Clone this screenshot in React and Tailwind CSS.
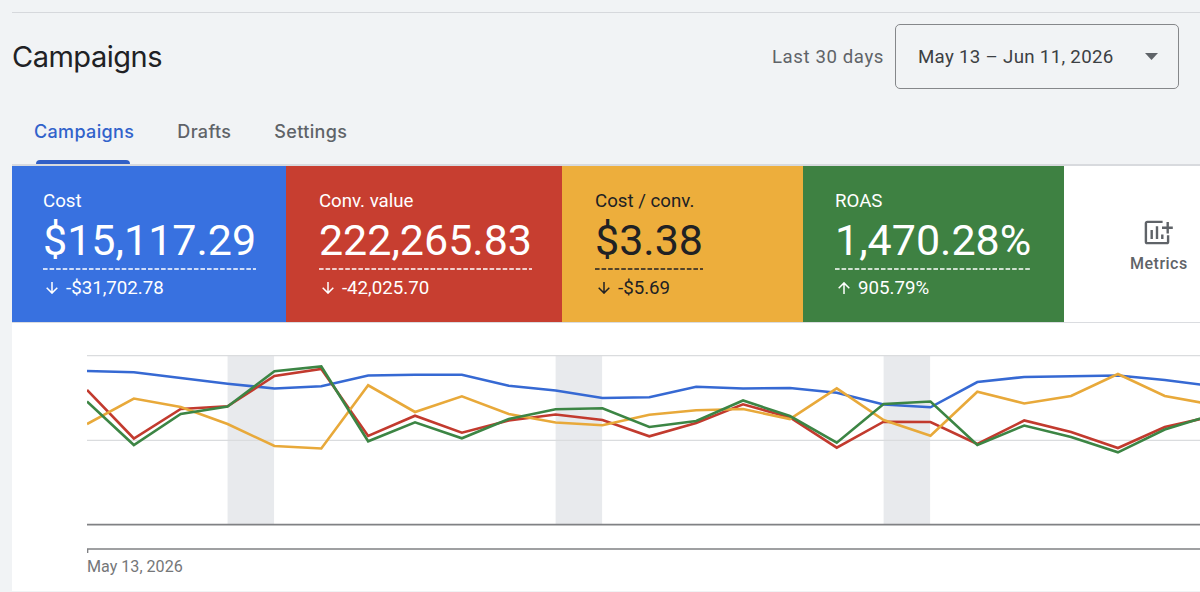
import { clsx } from 'clsx';

const TABS = ['Campaigns', 'Drafts', 'Settings'];

const CARDS = [
  { label: 'Cost', value: '$15,117.29', delta: '-$31,702.78', up: false, box: 'w-[274.4px] pl-[31px] bg-[#3871e0] text-white', line: '#ffffff' },
  { label: 'Conv. value', value: '222,265.83', delta: '-42,025.70', up: false, box: 'w-[275.6px] pl-[32.5px] bg-[#c73e30] text-white', line: '#ffffff' },
  { label: 'Cost / conv.', value: '$3.38', delta: '-$5.69', up: false, box: 'w-[241px] pl-[33px] bg-[#edae3c] text-[#202124]', line: '#202124' },
  { label: 'ROAS', value: '1,470.28%', delta: '905.79%', up: true, box: 'w-[261px] pl-8 bg-[#3e8142] text-white', line: '#ffffff' },
];

// Daily points, y in chart pixels
const STEP = 46.86;
const SERIES = [
  { color: '#3669d3', points: [31, 32.3, 38, 43.7, 48.5, 46.3, 35.5, 34.7, 34.7, 45.7, 50.5, 58, 57.3, 46.7, 48.5, 48, 52.7, 64.5, 67.3, 42, 37, 36.3, 35.5, 40, 46] },
  { color: '#c23a2e', points: [50, 98.5, 69, 66.3, 36, 29, 96, 75.7, 92.7, 80.5, 74.5, 80, 96.3, 83, 64.3, 77.5, 107.7, 81.7, 82, 104, 80.5, 92, 108, 87, 76.5] },
  { color: '#e8a93a', points: [84, 58.5, 67, 84, 106, 108.5, 45.3, 72, 56.3, 74, 82.5, 85.3, 74.7, 70.3, 69, 79, 48.3, 80, 95.7, 51.7, 63.5, 56, 34, 56, 64.5] },
  { color: '#3c8544', points: [61.5, 105, 74, 66.5, 31.3, 26.5, 101.3, 82.3, 98.3, 79, 69.3, 68.3, 87, 81, 60.5, 76, 102.7, 64, 61.5, 105, 85.5, 97, 112.3, 89.5, 75] },
];
const WEEKENDS = [3, 10, 17];

function Arrow({ up }) {
  return (
    <svg width="12" height="12" viewBox="0 0 12 12" fill="none" stroke="currentColor" strokeWidth="1.5" className={clsx('ml-[3px] mr-2', up && 'rotate-180')}>
      <path d="M6 0v11M.7 5.8 6 11.1l5.3-5.3" />
    </svg>
  );
}

function MetricsIcon() {
  return (
    <svg width="29" height="25" viewBox="0 0 29 25" fill="none" stroke="#5f6368" strokeWidth="2.4">
      <path d="M18.6 1.9H3.3C2.5 1.9 1.9 2.5 1.9 3.3v18.4c0 .8.6 1.4 1.4 1.4h19.4c.8 0 1.4-.6 1.4-1.4v-6.4" />
      <path d="M7.7 10v9M13 6.3V19M18.3 14.6V19M23.7 2v11.4M18 7.7h10.8" />
    </svg>
  );
}

function ScoreCard({ card }) {
  return (
    <div className={clsx('h-[156px] shrink-0 pt-6', card.box)}>
      <div className="h-[22px] text-[18.7px] leading-[22px]">{card.label}</div>
      <div className="h-[58px] w-fit">
        <div className="h-14 text-[43px] leading-[57px]">{card.value}</div>
        <svg className="block w-0 min-w-full" height="2">
          <path d="M0 1h230" stroke={card.line} strokeWidth="1.6" strokeDasharray="4.6 1.96" />
        </svg>
      </div>
      <div className="flex h-[35px] items-center text-[18.7px]">
        <Arrow up={card.up} />
        <span className="leading-6">{card.delta}</span>
      </div>
    </div>
  );
}

function Chart() {
  return (
    <svg width="1113" height="214" viewBox="0 0 1113 214" className="block" fill="none">
      {WEEKENDS.map((d) => (
        <rect key={d} x={d * STEP} y="16" width="46.5" height="168" fill="#e8eaed" />
      ))}
      <path d="M0 15.6h1113M0 100.3h1113" stroke="#dadcde" strokeWidth="1.2" />
      <path d="M0 184.7h1113" stroke="#808184" strokeWidth="1.7" />
      <path d="M.6 213v-4.1H1113" stroke="#808184" strokeWidth="1.5" />
      {SERIES.map((s) => (
        <polyline key={s.color} points={s.points.map((y, i) => `${i * STEP},${y}`).join(' ')} stroke={s.color} strokeWidth="2.6" />
      ))}
    </svg>
  );
}

export default function App() {
  return (
    <div className="h-[592px] w-[1200px] overflow-hidden bg-[#f1f3f5] pl-3 pt-3 font-['Roboto',sans-serif]">
      {/* Header */}
      <header className="flex h-[88px] justify-between border-t border-[#d6d8dc] pr-[21px] pt-[11px]">
        <h1 className="font-['Inter',sans-serif] text-[29px] leading-[65px] tracking-[-0.5px] text-[#202124]">Campaigns</h1>
        <div className="flex h-[65px] items-center">
          <span className="mr-[11px] pt-0.5 text-[18.6px] tracking-[0.6px] text-[#5f6368]">Last 30 days</span>
          <button className="flex h-[65px] w-[284px] items-center justify-between rounded-[5px] border-[1.5px] border-[#85878a] pl-[22px] pr-5 text-[18.7px] tracking-[0.3px] text-[#3c4043]">
            <span className="pt-px">May 13 – Jun 11, 2026</span>
            <svg width="13" height="7" viewBox="0 0 13 7"><path d="M0 0h13L6.5 7z" fill="#5f6368" /></svg>
          </button>
        </div>
      </header>

      {/* Tabs */}
      <nav className="flex h-[66px] gap-[43px] border-b-2 border-[#d8dade] pl-[22px] font-['Inter',sans-serif] text-[18px] font-medium tracking-[0.35px] text-[#5f6368]">
        {TABS.map((tab, i) => (
          <div key={tab} className={clsx('flex flex-col justify-between', i === 0 && 'text-[#3162cb]')}>
            <span className="h-16 leading-[64px]">{tab}</span>
            {i === 0 && <div className="-mt-1 ml-[2px] h-1 w-[94px] shrink-0 rounded-t-[4px] bg-[#315fc6]" />}
          </div>
        ))}
      </nav>

      <main className="h-[425px] bg-white">
        <section className="flex h-[157px] border-b border-[#dadce0]">
          {CARDS.map((card) => (
            <ScoreCard key={card.label} card={card} />
          ))}
          <div className="flex flex-col items-center pl-[66px] pt-[54px]">
            <MetricsIcon />
            <span className="mt-[9px] text-[16px] font-medium leading-5 tracking-[0.5px] text-[#5f6368]">Metrics</span>
          </div>
        </section>
        <section className="pl-[75px] pt-[17px]">
          <Chart />
          <div className="pt-px text-[16.1px] leading-6 text-[#757779]">May 13, 2026</div>
        </section>
      </main>
    </div>
  );
}
